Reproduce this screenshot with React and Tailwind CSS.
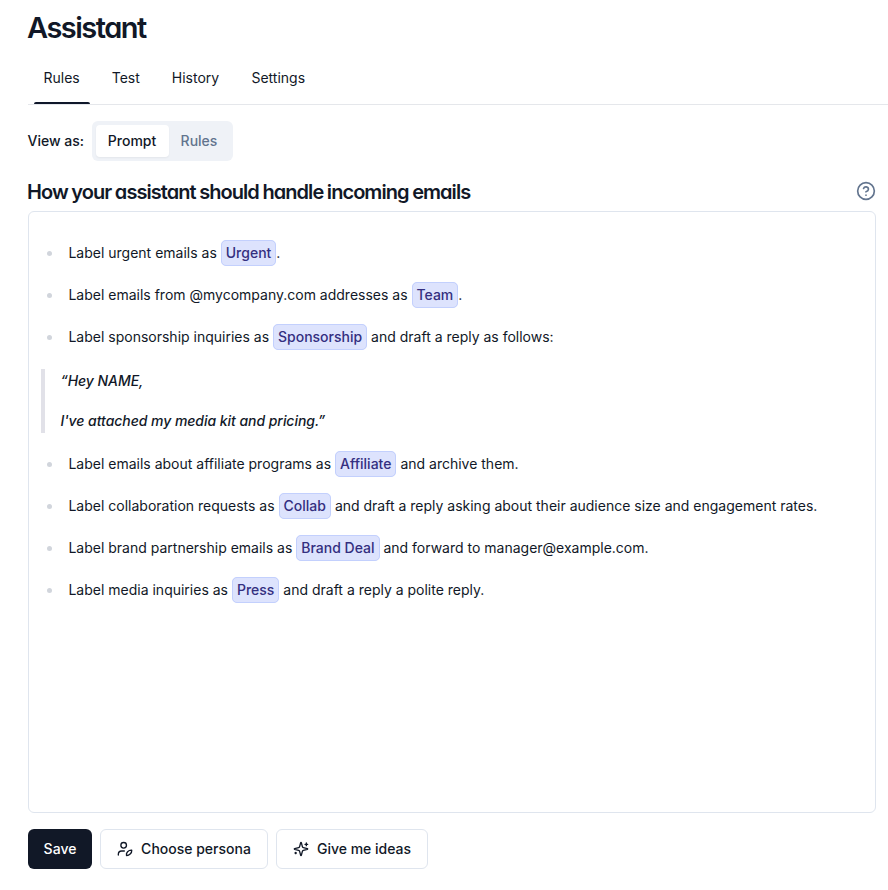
import { CircleHelp } from "lucide-react";

function Sparkles() {
  return (
    <svg className="size-4" viewBox="0 0 24 24" fill="none" stroke="currentColor" strokeWidth="2" strokeLinecap="round" strokeLinejoin="round">
      <path d="M9.937 15.5A2 2 0 0 0 8.5 14.063l-6.135-1.582a.5.5 0 0 1 0-.962L8.5 9.936A2 2 0 0 0 9.937 8.5l1.582-6.135a.5.5 0 0 1 .963 0L14.063 8.5A2 2 0 0 0 15.5 9.937l6.135 1.581a.5.5 0 0 1 0 .964L15.5 14.063a2 2 0 0 0-1.437 1.437l-1.582 6.135a.5.5 0 0 1-.963 0z" />
      <path d="M20 3v4M22 5h-4M4 17v2M5 18H3" />
    </svg>
  );
}

function PersonaIcon() {
  return (
    <svg className="size-4" viewBox="0 0 24 24" fill="none" stroke="currentColor" strokeWidth="2" strokeLinecap="round" strokeLinejoin="round">
      <circle cx="10" cy="6.5" r="4.2" />
      <path d="M2 21v-1a5 5 0 0 1 5-5h4" />
      <path d="M14.2 21.7c-.5-2.3.2-4 1.7-5.5 1.8-1.8 3.8-2.7 6.2-2.4.2 2.3-.7 4.2-2.4 5.8-1.6 1.5-3.3 2.3-5.5 2.1Z" />
    </svg>
  );
}

function Tag({ children }) {
  return <span className="rounded-[5px] border border-[#c3d0fd] bg-[#dde3fd] px-1 pt-[3px] pb-1 font-medium text-[#342f80]">{children}</span>;
}

function Item({ children }) {
  return (
    <li className="flex h-[42px] items-center">
      <span className="ml-[18px] mr-[16.45px] size-[5px] rounded-full bg-gray-300" />
      <p className="whitespace-nowrap">{children}</p>
    </li>
  );
}

export default function App() {
  return (
    <main className="h-[890px] overflow-hidden bg-white pl-7 font-['Inter',sans-serif] text-sm text-[#111827]">
      <h1 className="-ml-px h-14 pt-2.5 text-[29px] leading-9 font-semibold tracking-[-1.5px] [font-feature-settings:'cv11']">Assistant</h1>
      <nav className="flex h-[49px] border-b border-gray-200 pl-1.5">
        <span className="relative h-12 w-14 pt-3 pl-[9.5px]">
          Rules
          <span className="absolute inset-x-0 bottom-0 h-0.5 rounded-t-sm bg-[#0f172a]" />
        </span>
        <span className="ml-[21.7px] pt-3">Test</span>
        <span className="ml-8 pt-3">History</span>
        <span className="ml-[32.3px] pt-3">Settings</span>
      </nav>
      <div className="mt-4 -ml-[0.5px] flex h-10 items-center gap-[7.5px] font-medium">
        <span>View as:</span>
        <div className="flex h-10 items-center rounded-md bg-[#eff2f7] p-1">
          <span className="flex h-8 items-center rounded-sm bg-white px-[12.3px] shadow-xs">Prompt</span>
          <span className="px-3 text-slate-500">Rules</span>
        </div>
      </div>
      <div className="mt-4 mr-3 flex h-[34px] items-start justify-between">
        <h2 className="-ml-px text-[20px] leading-[30px] font-semibold tracking-[-0.95px] [word-spacing:-0.5px] [font-feature-settings:'cv11']">How your assistant should handle incoming emails</h2>
        <CircleHelp className="mt-1 size-5 text-slate-500" />
      </div>
      <section className="mr-3 h-[602px] rounded-md border border-[#dfe5ee] pt-5">
        <ul>
          <Item>Label urgent emails as <Tag>Urgent</Tag>.</Item>
          <Item>Label emails from @mycompany.com addresses as <Tag>Team</Tag>.</Item>
          <Item>Label sponsorship inquiries as <Tag>Sponsorship</Tag> and draft a reply as follows:</Item>
        </ul>
        <blockquote className="mt-[11px] mb-[10px] ml-3 h-16 border-l-4 border-[#e1e1e8] pl-[15.5px] leading-6 font-medium tracking-[-0.05px] italic">
          <p>“Hey NAME,</p>
          <p className="mt-4">I've attached my media kit and pricing.”</p>
        </blockquote>
        <ul>
          <Item>Label emails about affiliate programs as <Tag>Affiliate</Tag> and archive them.</Item>
          <Item>Label collaboration requests as <Tag>Collab</Tag> and draft a reply asking about their audience size and engagement rates.</Item>
          <Item>Label brand partnership emails as <Tag>Brand Deal</Tag> and forward to manager@example.com.</Item>
          <Item>Label media inquiries as <Tag>Press</Tag> and draft a reply a polite reply.</Item>
        </ul>
      </section>
      <div className="mt-4 flex h-10 gap-2 font-medium">
        <button className="w-16 rounded-md bg-[#111827] text-white">Save</button>
        <button className="flex w-42 items-center justify-center gap-2 rounded-md border border-[#dfe5ee]"><PersonaIcon />Choose persona</button>
        <button className="flex w-38 items-center justify-center gap-2 rounded-md border border-[#dfe5ee]"><Sparkles />Give me ideas</button>
      </div>
    </main>
  );
}
